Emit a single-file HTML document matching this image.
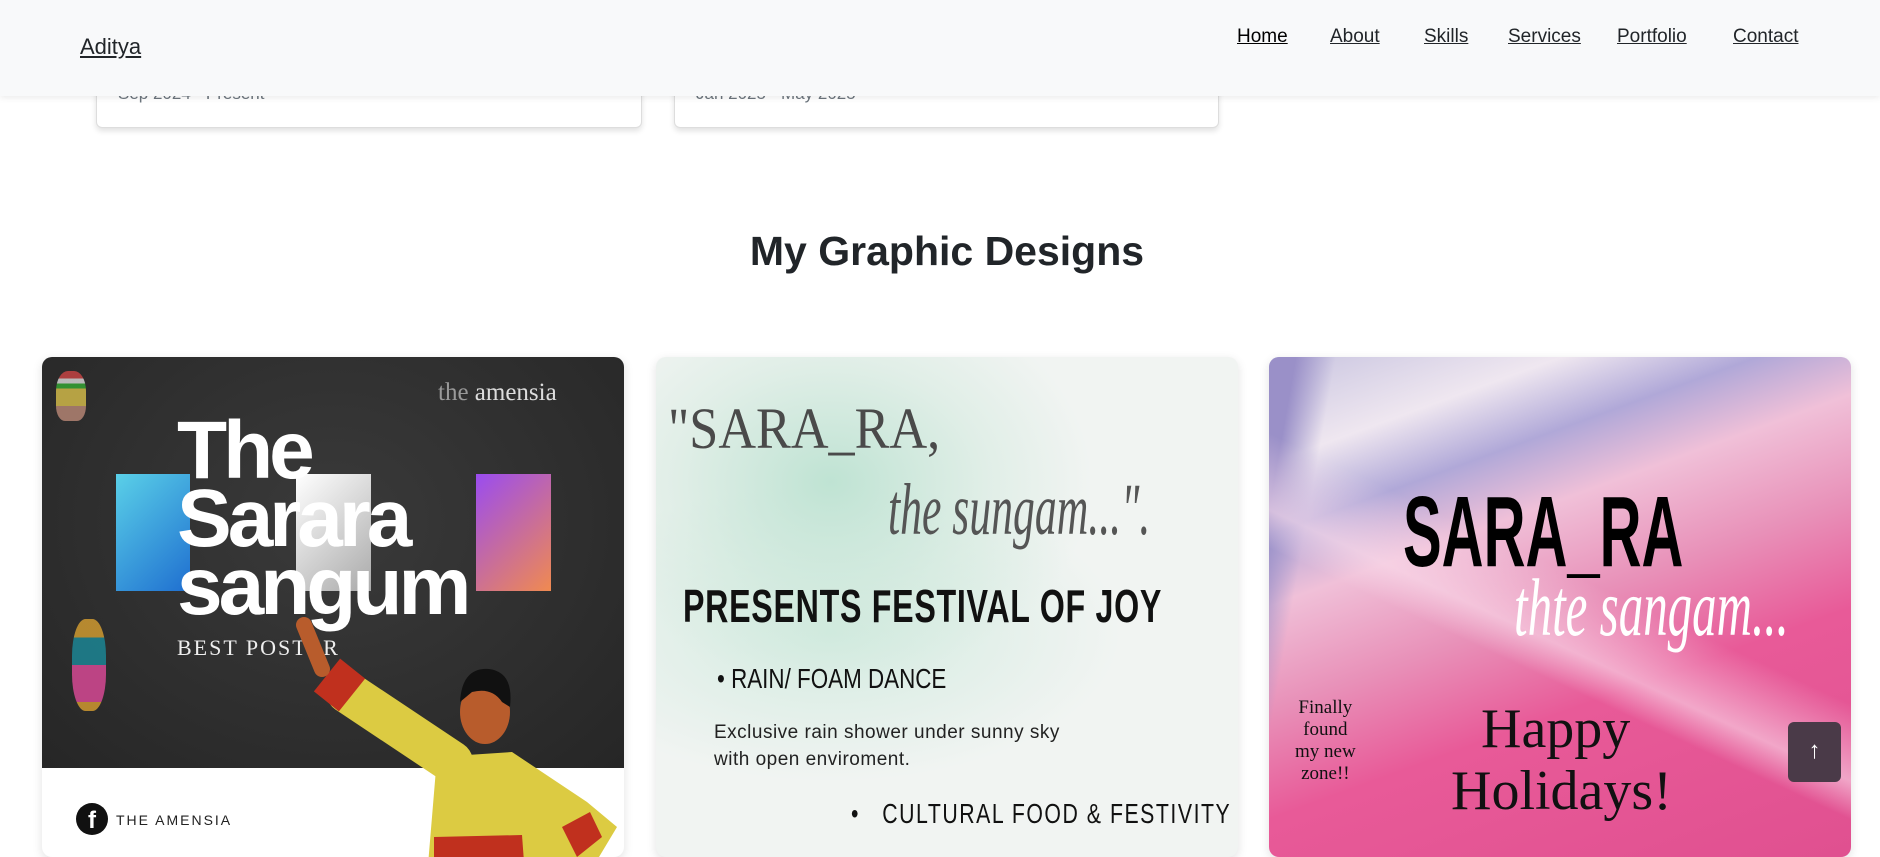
<!DOCTYPE html>
<html><head><meta charset="utf-8"><style>
*{margin:0;padding:0;box-sizing:border-box}
body{width:1880px;height:835px;overflow:hidden;background:#fff;font-family:"Liberation Sans",sans-serif;position:relative}
.nav{position:absolute;left:0;top:0;width:1880px;height:96px;background:#f8f9fa;box-shadow:0 2px 6px rgba(0,0,0,.08);z-index:10}
.nav a{position:absolute;color:#212529;text-decoration:underline;font-size:19px}
.brand{left:80px;top:34px;font-size:22px!important}
.card{position:absolute;top:40px;height:88px;background:#fff;border:1px solid #ddd;border-radius:6px;box-shadow:0 3px 6px rgba(0,0,0,.12)}
.card span{position:absolute;left:21px;top:43px;font-size:17px;color:#6c757d}
h2{position:absolute;left:0;width:1894px;text-align:center;top:228px;font-size:41px;font-weight:bold;color:#212529}
.d{position:absolute;top:357px;width:582px;height:500px;border-radius:10px;overflow:hidden;box-shadow:0 3px 10px rgba(0,0,0,.12)}
.abs{position:absolute;white-space:nowrap}
.n{font-family:'Liberation Sans Narrow','Liberation Sans',sans-serif;transform-origin:left top}
</style></head><body>
<div class="nav">
<a class="brand">Aditya</a>
<a style="left:1237px;top:26px;color:#000">Home</a>
<a style="left:1330px;top:26px">About</a>
<a style="left:1424px;top:26px">Skills</a>
<a style="left:1508px;top:26px">Services</a>
<a style="left:1617px;top:26px">Portfolio</a>
<a style="left:1733px;top:26px">Contact</a>
</div>
<div class="card" style="left:96px;width:546px"><span>Sep 2024 - Present</span></div>
<div class="card" style="left:674px;width:545px"><span>Jan 2025 - May 2025</span></div>
<h2>My Graphic Designs</h2>

<div class="d" style="left:42px;background:#fff">
 <div class="abs" style="left:0;top:0;width:582px;height:411px;background:radial-gradient(ellipse at 50% 40%,#3a3a3a,#262626)"></div>
 <div class="abs" style="left:74px;top:117px;width:74px;height:117px;background:linear-gradient(135deg,#5ad0e8,#1f6fd0)"></div>
 <div class="abs" style="left:254px;top:117px;width:75px;height:117px;background:linear-gradient(135deg,#fff,#aaa)"></div>
 <div class="abs" style="left:434px;top:117px;width:75px;height:117px;background:linear-gradient(135deg,#9a4cf0,#f08a50)"></div>
 <div class="abs" style="left:396px;top:22px;font-family:'Liberation Serif',serif;font-size:25px;color:#ddd"><span style="color:#999">the</span> amensia</div>
 <div class="abs" style="left:14px;top:14px;width:30px;height:50px;background:linear-gradient(#c44 0 15%,#ddd 15% 25%,#3a3 25% 35%,#d9c04a 35% 70%,#b87 70%);border-radius:40% 40% 30% 30%;opacity:.8"></div>
 <div class="abs" style="left:135px;top:60px;font-size:82px;font-weight:bold;color:#fff;line-height:68px;letter-spacing:-4px">The<br>Sarara<br>sangum</div>
 <div class="abs" style="left:30px;top:262px;width:34px;height:92px;background:linear-gradient(#d9a030 0 20%,#1a8a9a 20% 50%,#e04a9a 50% 90%,#d9a030 90%);border-radius:40%;opacity:.8"></div>
 <div class="abs" style="left:135px;top:278px;font-family:'Liberation Serif',serif;font-size:22px;color:#eee;letter-spacing:2px">BEST POSTER</div>
 <svg class="abs" style="left:0;top:0" width="582" height="500">
  <line x1="410" y1="405" x2="305" y2="335" stroke="#dccb42" stroke-width="42" stroke-linecap="round"/>
  <line x1="310" y1="338" x2="285" y2="318" stroke="#c0301e" stroke-width="42"/>
  <line x1="280" y1="312" x2="262" y2="268" stroke="#b85c2c" stroke-width="16" stroke-linecap="round"/>
  <path d="M385 520 L395 400 L470 395 L545 445 L575 470 L545 520 Z" fill="#dccb42"/>
  <ellipse cx="443" cy="355" rx="25" ry="32" fill="#b85c2c"/>
  <path d="M418 345 Q420 310 447 312 Q472 315 468 350 L460 345 Q450 330 430 335 Z" fill="#111"/>
  <path d="M392 480 L480 478 L482 505 L392 505 Z" fill="#c0301e"/>
  <path d="M520 470 L548 455 L560 480 L535 500 Z" fill="#c0301e"/>
 </svg>
 <div class="abs" style="left:34px;top:446px;width:32px;height:32px;border-radius:50%;background:#111;color:#fff;font-weight:bold;font-size:24px;text-align:center;line-height:36px">f</div>
 <div class="abs" style="left:74px;top:455px;font-size:14px;letter-spacing:2px;color:#222">THE AMENSIA</div>
</div>

<div class="d" style="left:656px;background:radial-gradient(ellipse 45% 40% at 30% 25%,#bfe3d3,rgba(200,230,215,.4) 60%,transparent),radial-gradient(ellipse 50% 30% at 30% 55%,#d3ebe0,transparent),#f1f4f2">
 <div class="abs" style="left:12px;top:38px;font-family:'Liberation Serif',serif;font-size:58px;color:#4a4a4a;transform:scaleX(.9);transform-origin:left">"SARA_RA,</div>
 <div class="abs" style="left:232px;top:110px;font-family:'Liberation Serif',serif;font-style:italic;font-size:46px;color:#555;transform:scale(.95,1.6);transform-origin:left top">the sungam...".</div>
 <div class="abs n" style="left:27px;top:222px;font-weight:bold;font-size:46px;color:#111;letter-spacing:1px;transform:scaleX(.7)">PRESENTS FESTIVAL OF JOY</div>
 <div class="abs n" style="left:61px;top:306px;font-size:28px;color:#111;transform:scaleX(.8)">• RAIN/ FOAM DANCE</div>
 <div class="abs" style="left:58px;top:362px;font-size:19px;color:#222;line-height:27px;letter-spacing:.5px">Exclusive rain shower under sunny sky<br>with open enviroment.</div>
 <div class="abs n" style="left:195px;top:441px;font-size:28px;color:#111;letter-spacing:2px;transform:scaleX(.76)">•&nbsp;&nbsp; CULTURAL FOOD &amp; FESTIVITY</div>
</div>

<div class="d" style="left:1269px;background:linear-gradient(160deg,#c8c4e0 0%,#efe7f0 15%,#b0a8d8 25%,#f0c0d8 35%,#e890b8 50%,#e85a98 65%,#e05090 100%)">
 <div class="abs" style="left:0;top:0;width:582px;height:500px;background:linear-gradient(25deg,transparent 40%,rgba(250,220,235,.6) 45%,transparent 55%),linear-gradient(100deg,#9a90c8 0 4%,transparent 10%)"></div>
 <div class="abs n" style="left:134px;top:118px;font-weight:bold;font-size:100px;color:#000;transform:scaleX(.58)">SARA_RA</div>
 <div class="abs" style="left:245px;top:205px;font-family:'Liberation Serif',serif;font-style:italic;font-size:48px;color:#fff;transform:scale(1.02,1.7);transform-origin:left top">thte sangam...</div>
 <div class="abs" style="left:26px;top:340px;font-family:'Liberation Serif',serif;font-size:19px;line-height:22px;color:#111;text-align:center">Finally<br>found<br>my new<br>zone!!</div>
 <div class="abs" style="left:212px;top:340px;font-family:'Liberation Serif',serif;font-size:56px;color:#111">Happy</div>
 <div class="abs" style="left:182px;top:402px;font-family:'Liberation Serif',serif;font-size:56px;color:#111">Holidays!</div>
</div>

<div class="abs" style="left:1788px;top:722px;width:53px;height:60px;background:#4a3a48;border-radius:6px;color:#fff;font-size:24px;text-align:center;line-height:58px;font-weight:bold;z-index:5">↑</div>
</body></html>
